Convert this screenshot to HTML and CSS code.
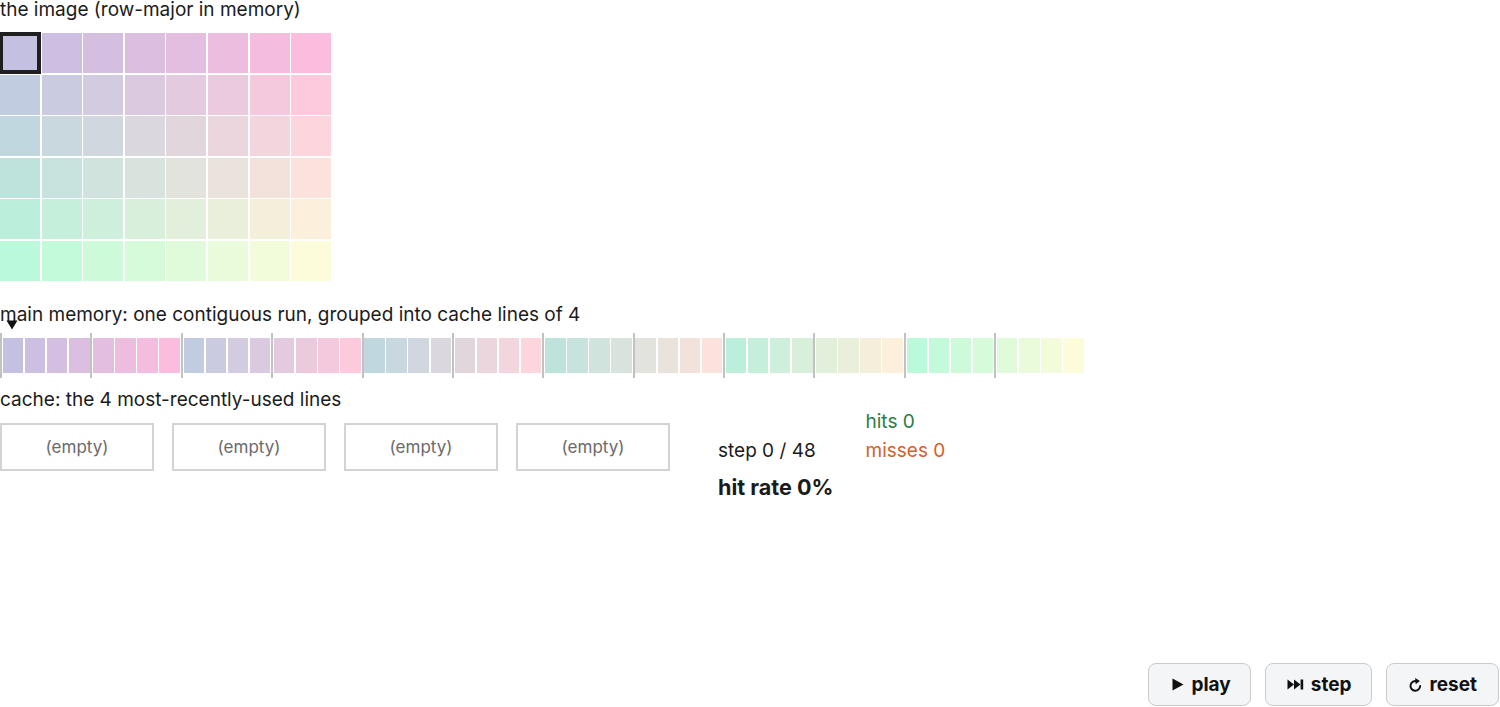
FILE: index.html
```html
<!DOCTYPE html>
<html lang="en">
<head>
<meta charset="utf-8">
<title>cache lines</title>
<link rel="stylesheet" href="styles.css">
<script src="script.js" defer></script>
</head>
<body>
<main class="app">
  <p class="label">the image (row-major in memory)</p>
  <div class="image" id="image"></div>

  <p class="label mem-label">main memory: one contiguous run, grouped into cache lines of 4</p>
  <div class="memory" id="memory">
    <svg class="pointer" viewBox="0 0 12 10" width="12" height="10"><path d="M0.5 0.5 L11.5 0.5 L6 9.5 Z" fill="#111"/></svg>
  </div>

  <p class="label cache-label">cache: the 4 most-recently-used lines</p>
  <div class="cache-row">
    <div class="cache">
      <div class="slot">(empty)</div>
      <div class="slot">(empty)</div>
      <div class="slot">(empty)</div>
      <div class="slot">(empty)</div>
    </div>
    <div class="stats">
      <span class="hits">hits 0</span>
      <span class="step">step 0 / 48</span>
      <span class="misses">misses 0</span>
      <span class="rate">hit rate 0%</span>
    </div>
  </div>

  <div class="controls">
    <button class="btn btn-play" type="button">
      <svg class="ico" viewBox="0 0 12 13" width="12" height="13"><path d="M0.5 0.5 L11.5 6.5 L0.5 12.5 Z" fill="#111"/></svg>
      play
    </button>
    <button class="btn btn-step" type="button">
      <svg class="ico" viewBox="0 0 17 11" width="17" height="11"><path d="M0.5 0.5 L7 5.5 L0.5 10.5 Z M7 0.5 L13.5 5.5 L7 10.5 Z" fill="#111"/><rect x="13.6" y="0.5" width="2.6" height="10" fill="#111"/></svg>
      step
    </button>
    <button class="btn btn-reset" type="button">
      <svg class="ico" viewBox="0 0 14 16" width="13" height="15"><path d="M12 9.6 A5.2 5.2 0 1 1 8.6 4.6" fill="none" stroke="#111" stroke-width="2.1" stroke-linecap="round"/><path d="M6.6 1 L11.8 4.2 L7.2 7.6 Z" fill="#111"/></svg>
      reset
    </button>
  </div>
</main>
</body>
</html>
```

FILE: script.js
```js
// Fill the 8x6 picture and the 48-cell memory strip with the same colours.
(function () {
  var COLS = 8, ROWS = 6, LINE = 4;
  var TL = [196, 192, 226], TR = [252, 188, 222];
  var BL = [186, 250, 218], BR = [252, 252, 218];

  function mix(a, b, t) {
    return [0, 1, 2].map(function (k) { return a[k] + (b[k] - a[k]) * t; });
  }
  function colour(r, c) {
    var u = c / (COLS - 1), v = r / (ROWS - 1);
    var rgb = mix(mix(TL, TR, u), mix(BL, BR, u), v);
    return 'rgb(' + rgb.map(Math.round).join(',') + ')';
  }

  var image = document.getElementById('image');
  var memory = document.getElementById('memory');
  var group = null;

  for (var i = 0; i < COLS * ROWS; i++) {
    var r = Math.floor(i / COLS), c = i % COLS, bg = colour(r, c);

    var px = document.createElement('div');
    px.className = 'px' + (i === 0 ? ' current' : '');
    px.style.background = bg;
    image.appendChild(px);

    if (i % LINE === 0) {
      group = document.createElement('div');
      group.className = 'line';
      memory.appendChild(group);
    }
    var cell = document.createElement('div');
    cell.className = 'cell';
    cell.style.background = bg;
    group.appendChild(cell);
  }
})();
```

FILE: styles.css
```css
* { box-sizing: border-box; }

html, body {
  margin: 0;
  padding: 0;
  background: #fff;
}

body {
  font-family: Inter, "Noto Sans", sans-serif;
  font-size: 19px;
  color: #1b1b1b;
}

.app {
  min-height: 100vh;
  display: flex;
  flex-direction: column;
  align-items: flex-start;
}

.label {
  margin: 0;
  line-height: 20px;
}

/* picture */
.image {
  margin-top: 13px;
  display: grid;
  grid-template-columns: repeat(8, 40px);
  grid-auto-rows: 40px;
  gap: 1.6px;
}

.px { position: relative; }

.px.current {
  z-index: 1;
  outline: 4px solid #1f1f1f;
  outline-offset: -3px;
}

/* memory strip */
.mem-label { margin-top: 24px; }

.memory {
  position: relative;
  margin-top: 8px;
  display: flex;
}

.line {
  display: flex;
  gap: 1.6px;
  padding: 5px 0.8px;
  border-left: 2px solid #c2c2c2;
}

.cell {
  width: 20.5px;
  height: 35px;
}

/* marker above the cell being read */
.pointer {
  position: absolute;
  left: 6px;
  top: -13px;
  display: block;
}

/* cache */
.cache-label { margin-top: 12px; }

.cache-row {
  margin-top: 2px;
  display: flex;
  align-items: flex-start;
}

.cache {
  margin-top: 11px;
  display: flex;
  gap: 18px;
}

.slot {
  width: 154px;
  height: 48px;
  border: 2px solid #d3d3d3;
  display: flex;
  align-items: center;
  justify-content: center;
  font-size: 17px;
  color: #6a6a6a;
}

.stats {
  margin-left: 48px;
  display: grid;
  grid-template-columns: auto auto;
  grid-template-areas:
    ".    hits"
    "step misses"
    "rate .";
  column-gap: 32px;
  row-gap: 9px;
  line-height: 20px;
}

.hits   { grid-area: hits;   color: #2b7d45; }
.misses { grid-area: misses; color: #d3612b; }
.step   { grid-area: step; }
.rate {
  grid-area: rate;
  margin-top: 5px;
  font-size: 21.6px;
  font-weight: 700;
  line-height: 24px;
}

/* playback controls */
.controls {
  margin-top: auto;
  align-self: stretch;
  display: flex;
  justify-content: flex-end;
  gap: 14px;
  padding: 0 1px 1px 0;
}

.btn {
  height: 43px;
  display: flex;
  align-items: center;
  gap: 7px;
  font-family: Inter, "Noto Sans", sans-serif;
  font-size: 19px;
  font-weight: 700;
  color: #111;
  background: #f4f5f7;
  border: 1.5px solid #c9cbcf;
  border-radius: 8px;
}

.btn-play  { padding: 0 19px 0 23px; }
.btn-step  { padding: 0 20px 0 21px; }
.btn-reset { padding: 0 21px 0 22px; }

.ico { display: block; flex: none; }
```
